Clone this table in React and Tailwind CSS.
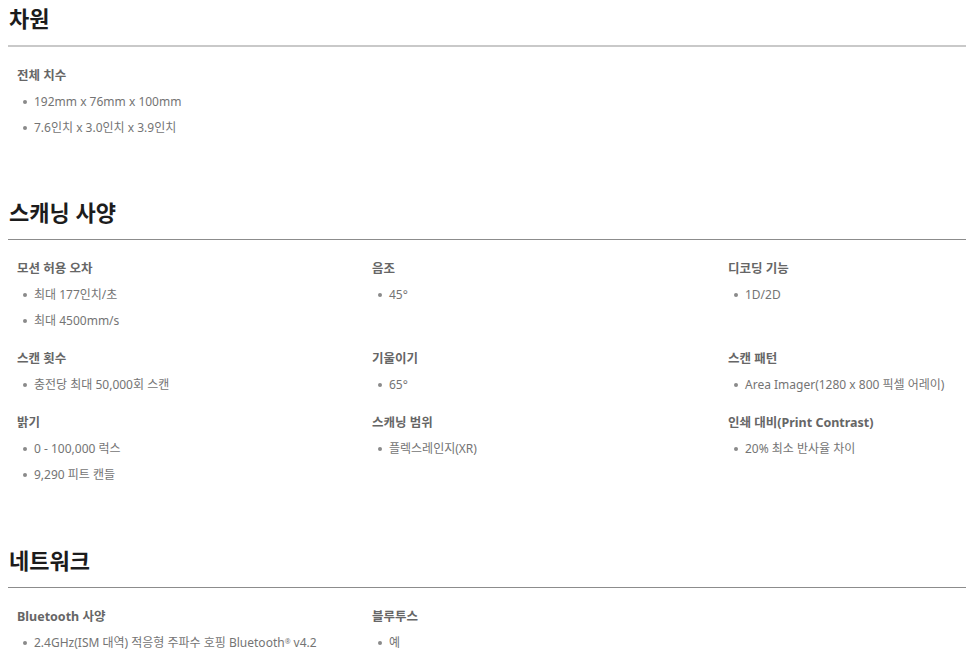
const sections = [
  {
    title: '차원',
    specs: [{ label: '전체 치수', items: ['192mm x 76mm x 100mm', '7.6인치 x 3.0인치 x 3.9인치'] }],
  },
  {
    title: '스캐닝 사양',
    specs: [
      { label: '모션 허용 오차', items: ['최대 177인치/초', '최대 4500mm/s'] },
      { label: '음조', items: ['45°'] },
      { label: '디코딩 기능', items: ['1D/2D'] },
      { label: '스캔 횟수', items: ['충전당 최대 50,000회 스캔'] },
      { label: '기울이기', items: ['65°'] },
      { label: '스캔 패턴', items: ['Area Imager(1280 x 800 픽셀 어레이)'] },
      { label: '밝기', items: ['0 - 100,000 럭스', '9,290 피트 캔들'] },
      { label: '스캐닝 범위', items: ['플렉스레인지(XR)'] },
      { label: '인쇄 대비(Print Contrast)', items: ['20% 최소 반사율 차이'] },
    ],
  },
  {
    title: '네트워크',
    specs: [
      { label: 'Bluetooth 사양', items: [<>2.4GHz(ISM 대역) 적응형 주파수 호핑 Bluetooth<sup className="text-[7px]">®</sup> v4.2</>] },
      { label: '블루투스', items: ['예'] },
    ],
  },
]

// spacing before each section (first one sits at the top)
const gaps = ['', 'mt-[51px]', 'mt-[52px]']

function Spec({ label, items }){
  return (
    <div>
      <p className="text-[12.5px] font-bold leading-[26px] text-[#666666]">{label}</p>
      {items.map((it, i) => (
        <div key={i} className="flex items-center pl-[6px] text-[12px] leading-[26px] text-[#747474]">
          <span className="w-[4px] h-[4px] rounded-full bg-[#8a8a8a] mr-[7px]" />
          <span>{it}</span>
        </div>
      ))}
    </div>
  )
}

export default function App(){
  return (
    <div className="min-h-[662px] bg-white pl-[8px] overflow-hidden" style={{ fontFamily: '"Noto Sans", "Noto Sans CJK KR", sans-serif' }}>
      {sections.map((s, i) => (
        <section key={i} className={gaps[i]}>
          <h2 className={`${i === 0 ? 'pt-[2px]' : 'pt-[4px]'} pl-[1px] text-[22px] font-bold leading-[32px] text-[#1c1c1c] mb-[11px]`}>{s.title}</h2>
          <div className={i === 0 ? 'h-[2px] bg-[#c9c9c9]' : 'h-px bg-[#8c8c8c]'} />
          <div className="grid grid-cols-[355px_356px_1fr] gap-y-[12px] pl-[9px] pt-[16px]">
            {s.specs.map((sp, j) => <Spec key={j} {...sp} />)}
          </div>
        </section>
      ))}
    </div>
  )
}
